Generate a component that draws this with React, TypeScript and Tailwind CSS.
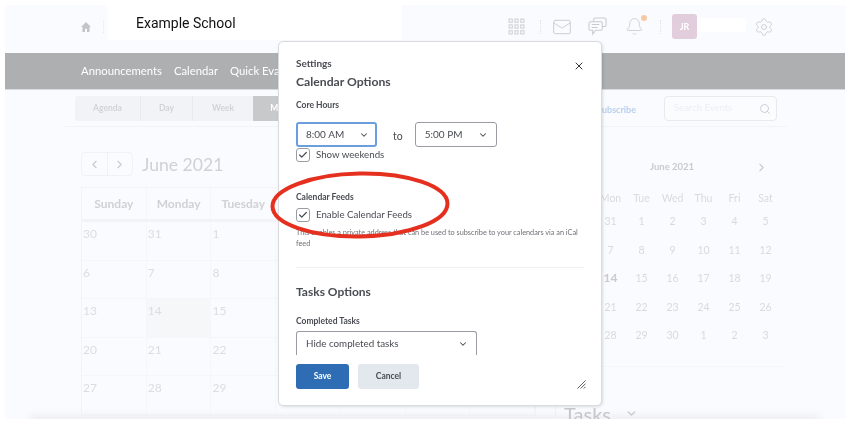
import React from 'react';
import { Mail, Bell, Settings, ChevronLeft, ChevronRight, ChevronDown, Search, X, Check } from 'lucide-react';

const mainRows = [
  ['30', '31', '1'],
  ['6', '7', '8'],
  ['13', '14', '15'],
  ['20', '21', '22'],
  ['27', '28', '29'],
];

const miniRows = [
  ['31', '1', '2', '3', '4', '5'],
  ['7', '8', '9', '10', '11', '12'],
  ['14', '15', '16', '17', '18', '19'],
  ['21', '22', '23', '24', '25', '26'],
  ['28', '29', '30', '1', '2', '3'],
];

const TopBar = () => (
  <div className="h-[48px] flex items-start pl-[75px] pr-[71px] bg-[#fafbfe]">
    <svg viewBox="0 0 12 12" className="w-[12px] h-[12px] mt-[16px] text-[#c3c4c8]" fill="currentColor">
      <path d="M6 1 L1 6 H2.5 V11 H5 V7.8 H7 V11 H9.5 V6 H11 Z" />
    </svg>
    <div className="h-[13px] ml-[11px] mt-[15px] border-l border-dotted border-[#e8e9ed]" />
    <div className="ml-[3px] w-[295px] h-[35px] bg-white pl-[29px] pt-[9px] text-[14px] leading-[18px] text-[#111] font-['Roboto',sans-serif]">
      Example School
    </div>
    <div className="ml-auto flex items-center h-[43px]">
      <svg viewBox="0 0 16 16" className="w-[17px] h-[17px] text-[#cfd0d4]" fill="none" stroke="currentColor" strokeWidth="1">
        {[1, 6.5, 12].flatMap(x => [1, 6.5, 12].map(y => <rect key={`${x}-${y}`} x={x} y={y} width="3" height="3" />))}
      </svg>
      <div className="h-[14px] ml-[15px] border-l border-dotted border-[#e0e1e5]" />
      <Mail className="w-[20px] h-[20px] ml-[11px] text-[#c9cacf]" strokeWidth={1.1} />
      <svg viewBox="0 0 20 20" className="w-[19px] h-[19px] ml-[16px] text-[#c9cacf]" fill="none" stroke="currentColor" strokeWidth="1.1">
        <path d="M6 5 V2.5 Q6 1 7.5 1 H17.5 Q19 1 19 2.5 V8.5 Q19 10 17.5 10 H15" />
        <path d="M2.5 5 H13.5 Q15 5 15 6.5 V12.5 Q15 14 13.5 14 H8 L5 18 V14 H2.5 Q1 14 1 12.5 V6.5 Q1 5 2.5 5 Z" />
        <path d="M4 8 H12 M4 11 H10" />
      </svg>
      <div className="relative ml-[18px]">
        <Bell className="w-[19px] h-[19px] text-[#c9cacf]" strokeWidth={1.1} />
        <div className="absolute -top-[2px] -right-[3px] w-[6px] h-[6px] rounded-full bg-[#f5c9a5]" />
      </div>
      <div className="h-[14px] ml-[16px] border-l border-dotted border-[#e0e1e5]" />
      <div className="ml-[11px] w-[25px] h-[25px] rounded-[3px] bg-[#e2cddc] flex items-center justify-center text-white text-[9px] font-bold font-['Lato',sans-serif]">
        JR
      </div>
      <div className="w-[49px] h-[14px] mb-[4px] bg-white" />
      <Settings className="w-[20px] h-[20px] ml-[8px] text-[#c9cacf]" strokeWidth={1} />
    </div>
  </div>
);

const NavBar = () => (
  <div className="h-[37px] bg-[#aeafb1] border-b border-[#d9dade] pl-[76px] flex items-center gap-[12px] text-[11.3px] text-white font-['Lato',sans-serif]">
    <span>Announcements</span>
    <span>Calendar</span>
    <span>Quick Eval</span>
  </div>
);

const Toolbar = () => (
  <div className="mx-[58px] h-[37px] pt-[6px] border-b border-[#f2f3f7] pl-[12px] pr-[10px] flex items-start text-[8.5px] font-bold text-[#d2d3d7]">
    <div className="flex h-[25px] rounded-[3px] bg-[#f2f3f6] overflow-hidden items-center text-center">
      <div className="w-[66px] leading-[25px] border-r border-[#e9eaee]">Agenda</div>
      <div className="w-[52px] leading-[25px] border-r border-[#e9eaee]">Day</div>
      <div className="w-[60px] leading-[25px]">Week</div>
      <div className="w-[70px] leading-[25px] bg-[#c8c9cb] text-white pr-[10px]">Month</div>
    </div>
    <span className="ml-auto mt-[7px] text-[9px] text-[#b8d0ec]">Subscribe</span>
    <div className="ml-[28px] w-[113px] h-[25px] rounded-[4px] border border-[#e9eaee] bg-[#fbfcfe] flex items-center pl-[9px] pr-[5px] font-normal text-[9.5px] text-[#eceef2]">
      <span>Search Events</span>
      <Search className="ml-auto w-[12px] h-[12px] text-[#c9cacf]" strokeWidth={1.8} />
    </div>
  </div>
);

const MainCalendar = () => (
  <div className="w-[455px] ml-[76px]">
    <div className="flex items-center h-[24px] mt-[25px]">
      <div className="flex w-[52px] h-[24px] rounded-[4px] border border-[#f1f2f5] text-[#c9cacf]">
        <div className="flex-1 flex items-center justify-center border-r border-[#f1f2f5]"><ChevronLeft className="w-[13px] h-[13px]" /></div>
        <div className="flex-1 flex items-center justify-center"><ChevronRight className="w-[13px] h-[13px]" /></div>
      </div>
      <span className="ml-[9px] mt-[2px] text-[17.6px] text-[#d0d1d5]">June 2021</span>
    </div>
    <div className="mt-[11px] border border-[#f2f3f6] text-[#dcdde1]">
      <div className="grid grid-cols-7 h-[34px] border-b-[3px] border-[#f2f3f6] text-[12px] font-bold text-[#d0d1d5] items-center text-center">
        {['Sunday', 'Monday', 'Tuesday', '', '', '', ''].map((d, i) => (
          <div key={i} className="h-full leading-[32px] border-r border-[#f5f6f9]">{d}</div>
        ))}
      </div>
      {mainRows.map(row => (
        <div key={row[0]} className="grid grid-cols-7 h-[38.6px] border-b border-[#f5f6f9] text-[12px]">
          {[...row, '', '', '', ''].map((d, i) => (
            <div key={i} className={`pl-[1px] pt-[3px] border-r border-[#f5f6f9] ${d === '14' ? 'bg-[#f6f7f9]' : ''}`}>{d}</div>
          ))}
        </div>
      ))}
    </div>
  </div>
);

const MiniCalendar = () => (
  <div className="ml-[19px] w-[250px] border-l border-[#f0f1f4] pl-[8px]">
    <div className="mt-[30px] h-[20px] pl-[31px] flex items-center text-[9.5px] font-bold text-[#c9cacf]">
      <span className="ml-[55px]">June 2021</span>
      <ChevronRight className="ml-[61px] w-[13px] h-[13px]" />
    </div>
    <div className="mt-[14px] grid grid-cols-6 w-[186px] ml-[31px] text-[10.5px] text-[#d9dade] text-center">
      {['Mon', 'Tue', 'Wed', 'Thu', 'Fri', 'Sat'].map(d => (
        <div key={d} className="h-[23px] leading-[14px]">{d}</div>
      ))}
      {miniRows.flatMap((row, r) => row.map((d, i) => (
        <div key={`${r}-${i}`} className={`h-[28.5px] leading-[14px] ${d === '14' ? 'font-bold text-[#c9cacf] text-[12px]' : ''}`}>{d}</div>
      )))}
    </div>
    <div className="mt-[9px] border-t border-[#f5f6f9] w-[220px]" />
    <div className="relative z-10 mt-[36px] flex items-center text-[20px] leading-[22px] text-[#c6c7cb]">
      Tasks
      <ChevronDown className="ml-[14px] w-[13px] h-[13px]" strokeWidth={2.5} />
    </div>
  </div>
);

const Box = () => (
  <div className="w-[14px] h-[14px] rounded-[3px] border border-[#9a9ca3] flex items-center justify-center shrink-0">
    <Check className="w-[10px] h-[10px] text-[#494c52]" strokeWidth={3} />
  </div>
);

const Modal = () => (
  <div className="absolute left-[278px] top-[41px] w-[324px] h-[365px] bg-white rounded-[5px] border border-[#dadbdf] shadow-[1px_1px_3px_rgba(0,0,0,0.12)] px-[17px] pt-[15px] text-[#494c52] font-['Lato',sans-serif]">
    <X className="absolute right-[16px] top-[18px] w-[12px] h-[12px] text-[#333]" strokeWidth={2} />
    <div className="text-[10px] leading-[13px] font-bold">Settings</div>
    <div className="mt-[3px] text-[12.2px] leading-[18px] font-bold">Calendar Options</div>
    <div className="mt-[8px] text-[8.5px] leading-[12px] font-bold">Core Hours</div>
    <div className="mt-[11px] flex items-center text-[10px]">
      <div className="w-[81px] h-[25px] rounded-[3px] border-2 border-[#6b9fdc] flex items-center pl-[8px] pr-[6px]">
        8:00 AM
        <ChevronDown className="ml-auto w-[10px] h-[10px]" strokeWidth={2.5} />
      </div>
      <span className="ml-[16px] mt-[4px] text-[10.5px]">to</span>
      <div className="ml-[12px] w-[82px] h-[25px] rounded-[3px] border border-[#9a9ca3] flex items-center pl-[9px] pr-[8px]">
        5:00 PM
        <ChevronDown className="ml-auto w-[10px] h-[10px]" strokeWidth={2.5} />
      </div>
    </div>
    <div className="mt-[1px] flex items-start gap-[6px] text-[9.7px] leading-[12px]">
      <Box />
      <span>Show weekends</span>
    </div>
    <div className="mt-[29px] text-[8.5px] leading-[12px] font-bold">Calendar Feeds</div>
    <div className="mt-[5px] flex items-start gap-[6px] text-[9.7px] leading-[12px]">
      <Box />
      <span>Enable Calendar Feeds</span>
    </div>
    <p className="mt-[5px] text-[7.3px] leading-[11px] w-[288px] text-[#6e7076]">
      This enables a private address that can be used to subscribe to your calendars via an iCal feed
    </p>
    <div className="mt-[18px] border-t border-[#f0f1f3]" />
    <div className="mt-[15px] text-[12px] leading-[18px] font-bold">Tasks Options</div>
    <div className="mt-[14px] text-[8.5px] leading-[12px] font-bold">Completed Tasks</div>
    <div className="mt-[4px] w-[181px] h-[24px] rounded-t-[3px] border border-b-0 border-[#9a9ca3] flex items-center pl-[9px] pr-[8px] text-[9.8px]">
      Hide completed tasks
      <ChevronDown className="ml-auto w-[10px] h-[10px]" strokeWidth={2.5} />
    </div>
    <div className="mt-[9px] flex gap-[9px] text-[8.5px] font-bold">
      <div className="w-[53px] h-[25px] rounded-[3px] bg-[#2e6db4] text-white flex items-center justify-center">Save</div>
      <div className="w-[61px] h-[25px] rounded-[3px] bg-[#e3e7ee] flex items-center justify-center">Cancel</div>
    </div>
    <svg viewBox="0 0 10 10" className="absolute right-[15px] bottom-[16px] w-[9px] h-[9px] text-[#494c52]" fill="none" stroke="currentColor" strokeWidth="1">
      <path d="M0.5 9.5 L9.5 0.5 M4 9.5 L9.5 4 M7.5 9.5 L9.5 7.5" />
    </svg>
  </div>
);

const App: React.FC = () => {
  return (
    <div className="relative w-[851px] h-[424px] overflow-hidden bg-white font-['Lato',sans-serif] blur-[0.4px]">
      <div className="relative ml-[5px] mr-[6px] mt-[5px] h-[414px] bg-[#fafbfe] overflow-hidden">
        <TopBar />
        <NavBar />
        <Toolbar />
        <div className="flex">
          <MainCalendar />
          <MiniCalendar />
        </div>
        <div className="absolute left-[25px] right-[25px] top-[410px] h-[8px] bg-[#eeeff1] blur-[3px]" />
      </div>
      <Modal />
      <svg viewBox="0 0 180 70" className="absolute left-[270px] top-[170px] w-[180px] h-[70px]" fill="none">
        <ellipse cx="90" cy="35" rx="87.5" ry="31.5" stroke="#e5301f" strokeWidth="4" transform="rotate(-1 90 35)" />
      </svg>
    </div>
  );
};

export default App;
